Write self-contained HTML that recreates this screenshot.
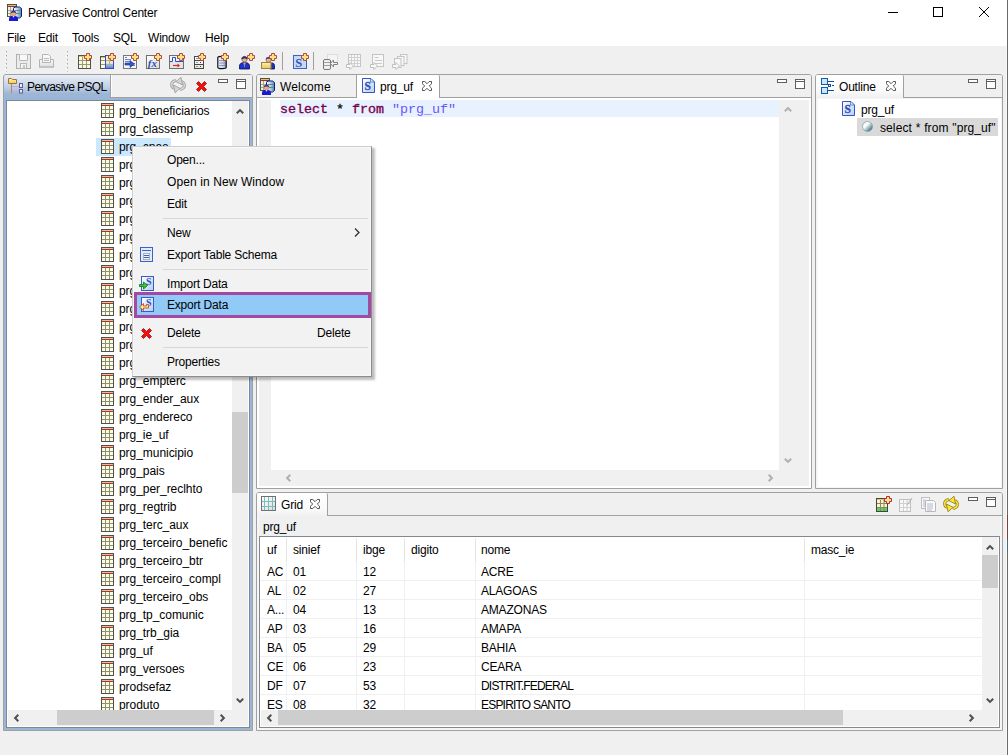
<!DOCTYPE html>
<html><head><meta charset="utf-8">
<style>
*{margin:0;padding:0;box-sizing:border-box}
html,body{width:1008px;height:755px;overflow:hidden;background:#f0f0f0;font-family:"Liberation Sans",sans-serif;font-size:12px;color:#000}
.a{position:absolute}
.t{position:absolute;white-space:nowrap;line-height:14px;letter-spacing:-0.2px}
svg{position:absolute;overflow:visible}
.tree .t{letter-spacing:-0.05px}
</style></head><body>
<svg width="0" height="0" style="position:absolute">
<defs>
<symbol id="tbl" viewBox="0 0 13 15">
<rect x="0.5" y="0.5" width="12" height="14" fill="#fbfbe6" stroke="#505050"/>
<rect x="1" y="1" width="11" height="1" fill="#f3c453"/>
<rect x="1" y="2" width="11" height="1" fill="#993366"/>
<rect x="4" y="3" width="1" height="11" fill="#8c9170"/>
<rect x="8" y="3" width="1" height="11" fill="#8c9170"/>
<rect x="1" y="6" width="11" height="1" fill="#8c9170"/>
<rect x="1" y="10" width="11" height="1" fill="#8c9170"/>
</symbol>

<symbol id="pcc" viewBox="0 0 17 17">
<rect x="1.5" y="0.5" width="9" height="12" fill="#f4f2dc" stroke="#505050"/>
<rect x="2" y="1" width="8" height="1" fill="#f0c050"/><rect x="2" y="2" width="8" height="1" fill="#8a3050"/>
<path d="M4.5 3v9M7.5 3v9M2 6.5h8M2 9.5h8" stroke="#a8a888" stroke-width="1"/>
<defs><linearGradient id="pccyl" x1="0" y1="0" x2="1" y2="0"><stop offset="0" stop-color="#ffffff"/><stop offset="0.5" stop-color="#b8d0dc"/><stop offset="1" stop-color="#4a8aa0"/></linearGradient></defs>
<path d="M7.5 4.5l1.5-1.5h4.5l2 1.5v8l-2 1.5h-4.5l-1.5-1.5z" fill="url(#pccyl)" stroke="#101a90" stroke-width="1"/>
<path d="M8.5 6.5h6M8.5 9.5h6" stroke="#5a7a98" stroke-width="0.9"/>
<circle cx="7.5" cy="9.6" r="2.5" fill="#f0b070" stroke="#a06a40" stroke-width="0.4"/><path d="M4.9 9.2c0-3.6 5.2-3.6 5.2 0c-1.2-1-4-1-5.2 0z" fill="#2a3aa8"/>
<path d="M3 17v-2.3c0-1.5 1.5-2.6 3-2.6h3c1.5 0 3 1.1 3 2.6v2.3z" fill="#1a1ad0"/><path d="M6.5 12.1l1 1.6 1-1.6z" fill="#e8e8f0"/>
</symbol>
<symbol id="sdocsym" viewBox="0 0 13 15">
<defs><linearGradient id="sdg" x1="0" y1="0" x2="1" y2="1"><stop offset="0" stop-color="#ffffff"/><stop offset="1" stop-color="#b8d0f0"/></linearGradient></defs>
<path d="M0.5 0.5h8.5l3.5 3.5v10.5h-12z" fill="url(#sdg)" stroke="#3355c8"/>
<path d="M8.5 0.5v3.5h4" fill="none" stroke="#4a7ac0" stroke-width="0.8"/>
<text x="2.6" y="12.2" font-family="Liberation Serif" font-weight="bold" font-size="11.5" fill="#2f4fc0" stroke="#2f4fc0" stroke-width="0.35">S</text>
</symbol>
<symbol id="xclose" viewBox="0 0 10 10">
<path d="M0.5 0.5h2.3l2.2 2.2 2.2-2.2h2.3v2.3l-2.2 2.2 2.2 2.2v2.3h-2.3l-2.2-2.2-2.2 2.2h-2.3v-2.3l2.2-2.2-2.2-2.2z" fill="none" stroke="#555" stroke-width="1"/>
</symbol>
</defs>
</svg>

<!-- title + menu bar -->
<div class="a" style="left:0;top:0;width:1008px;height:46px;background:#fff"></div>
<svg style="left:6px;top:4px" width="17" height="17"><use href="#pcc"/></svg>
<div class="t" style="left:28px;top:6px;">Pervasive Control Center</div>
<div class="a" style="left:888px;top:12px;width:10px;height:1px;background:#000"></div>
<div class="a" style="left:933px;top:7px;width:10px;height:10px;border:1px solid #000"></div>
<svg style="left:979px;top:7px" width="10" height="10"><path d="M0 0L10 10M10 0L0 10" stroke="#000" stroke-width="1"/></svg>

<div class="t" style="left:7px;top:31px;">File</div>
<div class="t" style="left:38px;top:31px;">Edit</div>
<div class="t" style="left:72px;top:31px;">Tools</div>
<div class="t" style="left:113px;top:31px;">SQL</div>
<div class="t" style="left:148px;top:31px;">Window</div>
<div class="t" style="left:205px;top:31px;">Help</div>


<!-- toolbar -->
<div id="toolbar">
<svg style="left:5px;top:51px" width="3" height="22"><rect x="1" y="0" width="1" height="1" fill="#a8a8a8"/><rect x="0" y="1" width="1" height="1" fill="#ffffff"/><rect x="1" y="1" width="1" height="1" fill="#d0d0d0"/><rect x="1" y="4" width="1" height="1" fill="#a8a8a8"/><rect x="0" y="5" width="1" height="1" fill="#ffffff"/><rect x="1" y="5" width="1" height="1" fill="#d0d0d0"/><rect x="1" y="8" width="1" height="1" fill="#a8a8a8"/><rect x="0" y="9" width="1" height="1" fill="#ffffff"/><rect x="1" y="9" width="1" height="1" fill="#d0d0d0"/><rect x="1" y="12" width="1" height="1" fill="#a8a8a8"/><rect x="0" y="13" width="1" height="1" fill="#ffffff"/><rect x="1" y="13" width="1" height="1" fill="#d0d0d0"/><rect x="1" y="16" width="1" height="1" fill="#a8a8a8"/><rect x="0" y="17" width="1" height="1" fill="#ffffff"/><rect x="1" y="17" width="1" height="1" fill="#d0d0d0"/><rect x="1" y="20" width="1" height="1" fill="#c8c8c8"/></svg>
<svg style="left:66px;top:51px" width="3" height="22"><rect x="1" y="0" width="1" height="1" fill="#a8a8a8"/><rect x="0" y="1" width="1" height="1" fill="#ffffff"/><rect x="1" y="1" width="1" height="1" fill="#d0d0d0"/><rect x="1" y="4" width="1" height="1" fill="#a8a8a8"/><rect x="0" y="5" width="1" height="1" fill="#ffffff"/><rect x="1" y="5" width="1" height="1" fill="#d0d0d0"/><rect x="1" y="8" width="1" height="1" fill="#a8a8a8"/><rect x="0" y="9" width="1" height="1" fill="#ffffff"/><rect x="1" y="9" width="1" height="1" fill="#d0d0d0"/><rect x="1" y="12" width="1" height="1" fill="#a8a8a8"/><rect x="0" y="13" width="1" height="1" fill="#ffffff"/><rect x="1" y="13" width="1" height="1" fill="#d0d0d0"/><rect x="1" y="16" width="1" height="1" fill="#a8a8a8"/><rect x="0" y="17" width="1" height="1" fill="#ffffff"/><rect x="1" y="17" width="1" height="1" fill="#d0d0d0"/><rect x="1" y="20" width="1" height="1" fill="#c8c8c8"/></svg>
<!-- save disabled -->
<svg style="left:16px;top:54px" width="16" height="16"><rect x="0.5" y="0.5" width="14" height="14" fill="#ececec" stroke="#b0b0b0"/><path d="M3.5 0.5v6h8v-6" fill="#f8f8f8" stroke="#b8b8b8"/><rect x="4.5" y="9.5" width="6" height="5" fill="#f4f4f0" stroke="#b8b8b8"/><rect x="7" y="11" width="2" height="3" fill="#c8c8c8"/></svg>
<!-- print disabled -->
<svg style="left:39px;top:54px" width="16" height="16"><path d="M3.5 0.5h6l2 2v6h-8z" fill="#f8f8f8" stroke="#b4b4b4"/><path d="M5 4.5h5M5 6.5h5" stroke="#b8b8c0"/><defs><linearGradient id="prg" x1="0" y1="0" x2="0" y2="1"><stop offset="0" stop-color="#fafafa"/><stop offset="1" stop-color="#dcdcdc"/></linearGradient></defs><path d="M0.5 5.5h3v3h8v-3h3v8h-14z" fill="url(#prg)" stroke="#b4b4b4"/><rect x="1" y="12" width="13" height="2" fill="#c4c4c4"/></svg>
<!-- table add -->
<svg style="left:78px;top:54px" width="16" height="16"><rect x="0.5" y="1.5" width="12" height="13" fill="#fbf8e2" stroke="#505050"/><rect x="1" y="2" width="11" height="1" fill="#f0c050"/><path d="M4.5 3v11M8.5 3v11M1 6.5h11M1 10.5h11" stroke="#9a9a70"/><path d="M8.5 -0.5 11.5 -0.5 11.5 1.5 13.5 1.5 13.5 4.5 11.5 4.5 11.5 6.5 8.5 6.5 8.5 4.5 6.5 4.5 6.5 1.5 8.5 1.5z" fill="#fde27c" stroke="#a84c4c" stroke-width="1"/></svg>
<!-- view add -->
<svg style="left:100px;top:54px" width="16" height="16"><rect x="0.5" y="2.5" width="8" height="12" fill="#fbf8e2" stroke="#505050"/><rect x="1" y="3" width="7" height="1" fill="#f0c050"/><path d="M1 6.5h7M1 10.5h7" stroke="#9a9a70"/><defs><linearGradient id="vg" x1="0" y1="0" x2="0" y2="1"><stop offset="0" stop-color="#f4f0d4"/><stop offset="0.6" stop-color="#e8e8d0"/><stop offset="0.7" stop-color="#9cc4ee"/><stop offset="1" stop-color="#4a7ac8"/></linearGradient></defs><rect x="5.5" y="1.5" width="8" height="13" fill="url(#vg)" stroke="#3a48c8"/><path d="M6 6.5h7M6 10.5h7M9.5 2v8" stroke="#b0b090"/><path d="M10.5 -0.5 13.5 -0.5 13.5 1.5 15.5 1.5 15.5 4.5 13.5 4.5 13.5 6.5 10.5 6.5 10.5 4.5 8.5 4.5 8.5 1.5 10.5 1.5z" fill="#fde27c" stroke="#a84c4c" stroke-width="1"/></svg>
<!-- import add -->
<svg style="left:123px;top:54px" width="16" height="16"><rect x="0.5" y="1.5" width="13" height="13" fill="#f6f6f6" stroke="#787878"/><path d="M2 3.5h2M2 5.5h6M2 7.5h5M8 9.5h4M8 11.5h4" stroke="#7080c0"/><path d="M2 9h5v-2.5l4.5 3.5-4.5 3.5v-2.5h-5z" fill="#2a58d0" stroke="#1a30a0" stroke-width="0.6"/><path d="M10.5 -0.5 13.5 -0.5 13.5 1.5 15.5 1.5 15.5 4.5 13.5 4.5 13.5 6.5 10.5 6.5 10.5 4.5 8.5 4.5 8.5 1.5 10.5 1.5z" fill="#fde27c" stroke="#a84c4c" stroke-width="1"/></svg>
<!-- fx -->
<svg style="left:146px;top:54px" width="16" height="16"><defs><linearGradient id="fxg" x1="0" y1="0" x2="1" y2="1"><stop offset="0" stop-color="#ffffff"/><stop offset="1" stop-color="#dcdcdc"/></linearGradient></defs><rect x="0.5" y="1.5" width="13" height="13" fill="url(#fxg)" stroke="#707070"/><text x="1.8" y="12.8" font-family="Liberation Serif" font-style="italic" font-weight="bold" font-size="11" fill="#2a52b0">fx</text><path d="M10.5 -0.5 13.5 -0.5 13.5 1.5 15.5 1.5 15.5 4.5 13.5 4.5 13.5 6.5 10.5 6.5 10.5 4.5 8.5 4.5 8.5 1.5 10.5 1.5z" fill="#fde27c" stroke="#a84c4c" stroke-width="1"/></svg>
<!-- proc -->
<svg style="left:169px;top:54px" width="16" height="16"><rect x="0.5" y="1.5" width="14" height="13" fill="#f4f4f4" stroke="#707070"/><rect x="1" y="7.5" width="13" height="6.5" fill="#e4e4e4"/><path d="M1 7.5h2.5v-4h3v4h7.5" fill="none" stroke="#2a50c8"/><path d="M4 11.5h5" stroke="#d02828" stroke-width="1.2"/><path d="M8.5 9.5l2.5 2-2.5 2z" fill="#d02828"/><path d="M10.5 -0.5 13.5 -0.5 13.5 1.5 15.5 1.5 15.5 4.5 13.5 4.5 13.5 6.5 10.5 6.5 10.5 4.5 8.5 4.5 8.5 1.5 10.5 1.5z" fill="#fde27c" stroke="#a84c4c" stroke-width="1"/></svg>
<!-- rows -->
<svg style="left:194px;top:54px" width="16" height="16"><rect x="0.5" y="2.5" width="9" height="12" fill="#e8e6d0" stroke="#484848"/><path d="M1 6.5h8M1 10.5h8" stroke="#484848"/><rect x="1" y="3" width="8" height="3" fill="#f8f8f8"/><rect x="1" y="7" width="8" height="3" fill="#f4f4ec"/><rect x="1" y="11" width="8" height="3" fill="#ecead4"/><g fill="#2a3a9a"><rect x="2.5" y="4" width="1" height="1"/><rect x="2.5" y="8" width="1" height="1"/><rect x="6" y="8" width="1" height="1"/><rect x="2.5" y="12" width="1" height="1"/><rect x="6" y="12" width="1" height="1"/></g><path d="M6.5 -0.5 9.5 -0.5 9.5 1.5 11.5 1.5 11.5 4.5 9.5 4.5 9.5 6.5 6.5 6.5 6.5 4.5 4.5 4.5 4.5 1.5 6.5 1.5z" fill="#fde27c" stroke="#a84c4c" stroke-width="1"/></svg>
<!-- cylinder -->
<svg style="left:217px;top:54px" width="16" height="16"><defs><linearGradient id="cyl" x1="0" y1="0" x2="1" y2="0"><stop offset="0" stop-color="#f8fbff"/><stop offset="0.6" stop-color="#c8d8ec"/><stop offset="1" stop-color="#7a9ac0"/></linearGradient></defs><path d="M0.8 3.5c0-1.5 8.4-1.5 8.4 0v10c0 1.5-8.4 1.5-8.4 0z" fill="url(#cyl)" stroke="#101010" stroke-width="1.2"/><path d="M2 6.5h6M2 9h6M2 11.5h6" stroke="#8080b0" stroke-width="0.8"/><path d="M6.5 -0.5 9.5 -0.5 9.5 1.5 11.5 1.5 11.5 4.5 9.5 4.5 9.5 6.5 6.5 6.5 6.5 4.5 4.5 4.5 4.5 1.5 6.5 1.5z" fill="#fde27c" stroke="#a84c4c" stroke-width="1"/></svg>
<!-- user -->
<svg style="left:239px;top:54px" width="16" height="16"><path d="M0.5 15v-3c0-2 1.5-3 3-3.3h4c1.5 0.3 3 1.3 3 3.3v3z" fill="#1a32d0" stroke="#101040" stroke-width="0.8"/><path d="M4.5 8.8h2l-1 5z" fill="#f0f0f0"/><path d="M5 9.5h1l-0.5 4z" fill="#c03040"/><circle cx="5.5" cy="5.3" r="2.6" fill="#f0b880" stroke="#603020" stroke-width="0.5"/><path d="M2.7 5c0-3.5 5.6-3.5 5.6 0c-1-1-4.6-1-5.6 0z" fill="#2a3aa0" stroke="#101040" stroke-width="0.5"/><path d="M10.5 -0.5 13.5 -0.5 13.5 1.5 15.5 1.5 15.5 4.5 13.5 4.5 13.5 6.5 10.5 6.5 10.5 4.5 8.5 4.5 8.5 1.5 10.5 1.5z" fill="#fde27c" stroke="#a84c4c" stroke-width="1"/></svg>
<!-- group -->
<svg style="left:261px;top:54px" width="16" height="16"><path d="M9 15v-3.5c0-1.5 1-2.5 2.2-2.5s2.3 1 2.3 2.5v3.5z" fill="#1a32c0" stroke="#101040" stroke-width="0.8"/><circle cx="7.5" cy="5.8" r="2.5" fill="#f0b880" stroke="#603020" stroke-width="0.5"/><path d="M4.8 5.5c0-3.3 5.4-3.3 5.4 0c-1-1-4.4-1-5.4 0z" fill="#2a3aa0"/><defs><linearGradient id="fg2" x1="0" y1="0" x2="0" y2="1"><stop offset="0" stop-color="#f6f2a8"/><stop offset="1" stop-color="#e8c860"/></linearGradient></defs><rect x="0.5" y="8.5" width="9.5" height="6" fill="url(#fg2)" stroke="#a08040"/><path d="M10.5 -0.5 13.5 -0.5 13.5 1.5 15.5 1.5 15.5 4.5 13.5 4.5 13.5 6.5 10.5 6.5 10.5 4.5 8.5 4.5 8.5 1.5 10.5 1.5z" fill="#fde27c" stroke="#a84c4c" stroke-width="1"/></svg>
<div class="a" style="left:282px;top:52px;width:1px;height:18px;background:#a0a0a0"></div>
<!-- S add -->
<svg style="left:293px;top:54px" width="16" height="16"><rect x="0.5" y="1.5" width="13" height="13" fill="#c5d9f3" stroke="#3a62c8"/><text x="2.3" y="12.8" font-family="Liberation Serif" font-weight="bold" font-size="12.5" fill="#3050c0">S</text><path d="M10.5 -0.5 13.5 -0.5 13.5 1.5 15.5 1.5 15.5 4.5 13.5 4.5 13.5 6.5 10.5 6.5 10.5 4.5 8.5 4.5 8.5 1.5 10.5 1.5z" fill="#fde27c" stroke="#a84c4c" stroke-width="1"/></svg>
<div class="a" style="left:313px;top:52px;width:1px;height:18px;background:#a0a0a0"></div>
<!-- disabled -->
<svg style="left:323px;top:54px" width="16" height="16"><rect x="4.5" y="0.5" width="10" height="10" fill="#f4f4f4" stroke="#dcdcdc"/><rect x="0.5" y="5.5" width="7" height="10" rx="1.5" fill="#f0f0f0" stroke="#787878"/><path d="M1 8.5h6M1 11.5h6" stroke="#a0a0a0"/><path d="M14.5 8.5h-4v-2.5l-3 3.5 3 3.5v-2.5h4z" fill="#f4f4f4" stroke="#808080"/></svg>
<svg style="left:346px;top:54px" width="16" height="16"><rect x="2.5" y="0.5" width="12" height="12" fill="#f8f8f8" stroke="#c4c4c4"/><path d="M5.5 1v11M8.5 1v11M11.5 1v11M3 3.5h11M3 6.5h11M3 9.5h11" stroke="#d0d0d0"/><path d="M0.5 10.5h3.5v-2l3.5 3.5-3.5 3.5v-2h-3.5z" fill="#f8f8f8" stroke="#c0c0c0"/></svg>
<svg style="left:370px;top:54px" width="16" height="16"><rect x="2.5" y="0.5" width="11" height="12" fill="#f8f8f8" stroke="#c4c4c4"/><path d="M4.5 3.5h4M5 6.5h7M5 9.5h7" stroke="#c8c8c8"/><path d="M0.5 10.5h3.5v-2l3.5 3.5-3.5 3.5v-2h-3.5z" fill="#f8f8f8" stroke="#c0c0c0"/></svg>
<svg style="left:392px;top:54px" width="16" height="16"><rect x="8.5" y="0.5" width="6.5" height="9" fill="#f8f8f8" stroke="#c4c4c4"/><rect x="5.5" y="2.5" width="6.5" height="9" fill="#f8f8f8" stroke="#c4c4c4"/><rect x="2.5" y="4.5" width="6.5" height="9" fill="#f8f8f8" stroke="#c4c4c4"/><path d="M0.5 10.5h3.5v-2l3.5 3.5-3.5 3.5v-2h-3.5z" fill="#f8f8f8" stroke="#c0c0c0"/></svg>
</div>


<!-- ============ LEFT PANEL (Pervasive PSQL) ============ -->
<div class="a" style="left:3px;top:74px;width:250px;height:657px;border:1px solid #a0a0a0;border-radius:3px 3px 0 0;background:#9bb5d6"></div>
<div class="a" style="left:111px;top:75px;width:141px;height:22px;background:#f0f0f0;border-left:1px solid #fff"></div>
<div class="a" style="left:110px;top:75px;width:142px;height:23px;border-left:1px solid #a0a0a0;border-bottom:1px solid #a0a0a0"></div>
<div class="a" style="left:4px;top:75px;width:106px;height:24px;border-radius:2px 0 0 0;background:linear-gradient(#e8eef7,#c0d0e4 50%,#9db6d6 78%,#9bb5d6)"></div>
<div class="a" style="left:6px;top:100px;width:244px;height:628px;border:1px solid #7c8796;background:#fff"></div>
<!-- folder tree icon -->
<svg style="left:8px;top:78px" width="16" height="16">
<defs><linearGradient id="fold" x1="0" y1="0" x2="0" y2="1"><stop offset="0" stop-color="#fff6b0"/><stop offset="1" stop-color="#f8c840"/></linearGradient></defs>
<path d="M0.5 0.5h3l1 1h4v4h-8z" fill="url(#fold)" stroke="#a87038"/>
<rect x="3" y="6" width="1" height="9" fill="#b8865a"/>
<path d="M4 8.5h7M4 13.5h7" stroke="#c8a8d8"/>
<rect x="11.5" y="5.5" width="3" height="4" fill="#e4f0dc" stroke="#5a5aa8"/>
<rect x="11.5" y="11.5" width="3" height="3.5" fill="#e4f0dc" stroke="#5a5aa8"/>
</svg>
<div class="t" style="left:27px;top:80px;letter-spacing:-0.6px">Pervasive PSQL</div>
<!-- sync disabled -->
<svg style="left:170px;top:77px" width="17" height="17"><g fill="none" stroke-linecap="round">
<path d="M5 3.8C0.5 5 0.5 10.5 5 11.3" stroke="#a4a4a4" stroke-width="3"/>
<path d="M11 12.2C15.5 11 15.5 5.5 11 4.7" stroke="#a4a4a4" stroke-width="3"/>
<path d="M5 3.8C0.5 5 0.5 10.5 5 11.3" stroke="#d4d4d4" stroke-width="1.4"/>
<path d="M11 12.2C15.5 11 15.5 5.5 11 4.7" stroke="#d4d4d4" stroke-width="1.4"/></g>
<path d="M3.5 8L10 11.3 5 15.8z" fill="#d4d4d4" stroke="#a4a4a4" stroke-width="0.9" stroke-linejoin="round"/>
<path d="M12.5 8L6 4.7 11 0.2z" fill="#d4d4d4" stroke="#a4a4a4" stroke-width="0.9" stroke-linejoin="round"/>
</svg>
<!-- red x -->
<svg style="left:196px;top:81px" width="11" height="11"><path d="M0.5 2.5l2-2 3 3 3-3 2 2-3 3 3 3-2 2-3-3-3 3-2-2 3-3z" fill="#ee1111" stroke="#b00000" stroke-width="0.8"/></svg>
<!-- min / max -->
<div class="a" style="left:218px;top:79px;width:10px;height:4px;border:1px solid #5e5e5e;background:#fff"></div>
<div class="a" style="left:236px;top:79px;width:10px;height:10px;border:1px solid #5e5e5e;background:#fff;box-shadow:inset 0 1px 0 #fff,inset 0 2px 0 #5e5e5e"></div>

<!-- tree -->
<div class="a tree" style="left:7px;top:101px;width:225px;height:609px;overflow:hidden">
<div class="a" style="left:89px;top:37px;width:75px;height:18px;background:#cce8ff"></div>
<svg style="left:94px;top:2px" width="13" height="15"><use href="#tbl"/></svg><div class="t" style="left:112px;top:3px">prg_beneficiarios</div>
<svg style="left:94px;top:20px" width="13" height="15"><use href="#tbl"/></svg><div class="t" style="left:112px;top:21px">prg_classemp</div>
<svg style="left:94px;top:38px" width="13" height="15"><use href="#tbl"/></svg><div class="t" style="left:112px;top:39px">prg_cnae</div>
<svg style="left:94px;top:56px" width="13" height="15"><use href="#tbl"/></svg><div class="t" style="left:112px;top:57px">prg_cnae_sub</div>
<svg style="left:94px;top:74px" width="13" height="15"><use href="#tbl"/></svg><div class="t" style="left:112px;top:75px">prg_compl</div>
<svg style="left:94px;top:92px" width="13" height="15"><use href="#tbl"/></svg><div class="t" style="left:112px;top:93px">prg_conta</div>
<svg style="left:94px;top:110px" width="13" height="15"><use href="#tbl"/></svg><div class="t" style="left:112px;top:111px">prg_contab</div>
<svg style="left:94px;top:128px" width="13" height="15"><use href="#tbl"/></svg><div class="t" style="left:112px;top:129px">prg_cst</div>
<svg style="left:94px;top:146px" width="13" height="15"><use href="#tbl"/></svg><div class="t" style="left:112px;top:147px">prg_doc</div>
<svg style="left:94px;top:164px" width="13" height="15"><use href="#tbl"/></svg><div class="t" style="left:112px;top:165px">prg_emp</div>
<svg style="left:94px;top:182px" width="13" height="15"><use href="#tbl"/></svg><div class="t" style="left:112px;top:183px">prg_emp_aux</div>
<svg style="left:94px;top:200px" width="13" height="15"><use href="#tbl"/></svg><div class="t" style="left:112px;top:201px">prg_emp_compl</div>
<svg style="left:94px;top:218px" width="13" height="15"><use href="#tbl"/></svg><div class="t" style="left:112px;top:219px">prg_emp_obs</div>
<svg style="left:94px;top:236px" width="13" height="15"><use href="#tbl"/></svg><div class="t" style="left:112px;top:237px">prg_empresa</div>
<svg style="left:94px;top:254px" width="13" height="15"><use href="#tbl"/></svg><div class="t" style="left:112px;top:255px">prg_empresas</div>
<svg style="left:94px;top:272px" width="13" height="15"><use href="#tbl"/></svg><div class="t" style="left:112px;top:273px">prg_empterc</div>
<svg style="left:94px;top:290px" width="13" height="15"><use href="#tbl"/></svg><div class="t" style="left:112px;top:291px">prg_ender_aux</div>
<svg style="left:94px;top:308px" width="13" height="15"><use href="#tbl"/></svg><div class="t" style="left:112px;top:309px">prg_endereco</div>
<svg style="left:94px;top:326px" width="13" height="15"><use href="#tbl"/></svg><div class="t" style="left:112px;top:327px">prg_ie_uf</div>
<svg style="left:94px;top:344px" width="13" height="15"><use href="#tbl"/></svg><div class="t" style="left:112px;top:345px">prg_municipio</div>
<svg style="left:94px;top:362px" width="13" height="15"><use href="#tbl"/></svg><div class="t" style="left:112px;top:363px">prg_pais</div>
<svg style="left:94px;top:380px" width="13" height="15"><use href="#tbl"/></svg><div class="t" style="left:112px;top:381px">prg_per_reclhto</div>
<svg style="left:94px;top:398px" width="13" height="15"><use href="#tbl"/></svg><div class="t" style="left:112px;top:399px">prg_regtrib</div>
<svg style="left:94px;top:416px" width="13" height="15"><use href="#tbl"/></svg><div class="t" style="left:112px;top:417px">prg_terc_aux</div>
<svg style="left:94px;top:434px" width="13" height="15"><use href="#tbl"/></svg><div class="t" style="left:112px;top:435px">prg_terceiro_benefic</div>
<svg style="left:94px;top:452px" width="13" height="15"><use href="#tbl"/></svg><div class="t" style="left:112px;top:453px">prg_terceiro_btr</div>
<svg style="left:94px;top:470px" width="13" height="15"><use href="#tbl"/></svg><div class="t" style="left:112px;top:471px">prg_terceiro_compl</div>
<svg style="left:94px;top:488px" width="13" height="15"><use href="#tbl"/></svg><div class="t" style="left:112px;top:489px">prg_terceiro_obs</div>
<svg style="left:94px;top:506px" width="13" height="15"><use href="#tbl"/></svg><div class="t" style="left:112px;top:507px">prg_tp_comunic</div>
<svg style="left:94px;top:524px" width="13" height="15"><use href="#tbl"/></svg><div class="t" style="left:112px;top:525px">prg_trb_gia</div>
<svg style="left:94px;top:542px" width="13" height="15"><use href="#tbl"/></svg><div class="t" style="left:112px;top:543px">prg_uf</div>
<svg style="left:94px;top:560px" width="13" height="15"><use href="#tbl"/></svg><div class="t" style="left:112px;top:561px">prg_versoes</div>
<svg style="left:94px;top:578px" width="13" height="15"><use href="#tbl"/></svg><div class="t" style="left:112px;top:579px">prodsefaz</div>
<svg style="left:94px;top:596px" width="13" height="15"><use href="#tbl"/></svg><div class="t" style="left:112px;top:597px">produto</div>
</div>
<div class="a" style="left:232px;top:101px;width:16px;height:609px;background:#f0f0f0"></div>
<div class="a" style="left:232px;top:412px;width:16px;height:81px;background:#cdcdcd"></div>
<svg style="left:236px;top:108px" width="8" height="6"><path d="M0.8 5.3L4 2.1 7.2 5.3" fill="none" stroke="#505050" stroke-width="2"/></svg>
<svg style="left:236px;top:698px" width="8" height="6"><path d="M0.8 0.7L4 3.9 7.2 0.7" fill="none" stroke="#505050" stroke-width="2"/></svg>
<div class="a" style="left:8px;top:710px;width:240px;height:16px;background:#f0f0f0"></div>
<div class="a" style="left:57px;top:710px;width:157px;height:15px;background:#cdcdcd"></div>
<svg style="left:13px;top:714px" width="6" height="8"><path d="M5.3 0.8L2.1 4 5.3 7.2" fill="none" stroke="#505050" stroke-width="2"/></svg>
<svg style="left:220px;top:714px" width="6" height="8"><path d="M0.7 0.8L3.9 4 0.7 7.2" fill="none" stroke="#505050" stroke-width="2"/></svg>

<!-- ============ EDITOR PANEL ============ -->
<div class="a" style="left:256px;top:74px;width:556px;height:415px;border:1px solid #a0a0a0;border-radius:3px 3px 0 0;background:#fff"></div>
<div class="a" style="left:257px;top:75px;width:554px;height:23px;background:#f0f0f0;border-bottom:1px solid #a0a0a0;border-radius:2px 2px 0 0"></div>
<div class="a" style="left:356px;top:75px;width:84px;height:23px;background:#fff;border-left:1px solid #a0a0a0;border-right:1px solid #a0a0a0;border-radius:0 2px 0 0"></div>
<!-- welcome icon -->
<svg style="left:259px;top:78px" width="17" height="17"><use href="#pcc"/></svg>
<div class="t" style="left:280px;top:80px;letter-spacing:0.15px">Welcome</div>
<!-- S doc icon -->
<svg style="left:362px;top:78px" width="13" height="15"><use href="#sdocsym"/></svg>
<div class="t" style="left:380px;top:80px">prg_uf</div>
<svg style="left:422px;top:81px" width="10" height="10"><use href="#xclose"/></svg>
<div class="a" style="left:777px;top:79px;width:10px;height:4px;border:1px solid #5e5e5e;background:#fff"></div>
<div class="a" style="left:795px;top:79px;width:10px;height:10px;border:1px solid #5e5e5e;background:#fff;box-shadow:inset 0 1px 0 #fff,inset 0 2px 0 #5e5e5e"></div>
<!-- editor content -->
<div class="a" style="left:259px;top:100px;width:12px;height:370px;background:#f0f0f0"></div>
<div class="a" style="left:280px;top:100px;width:499px;height:17px;background:#e8f2fe"></div>
<div class="a" style="left:779px;top:100px;width:30px;height:386px;background:#f0f0f0"></div>
<div class="a" style="left:259px;top:470px;width:521px;height:16px;background:#f0f0f0"></div>
<div class="t" style="left:280px;top:102px;font-family:'Liberation Mono',monospace;font-size:13.33px;line-height:15px;font-weight:normal;-webkit-text-stroke:0.35px #6e004a;color:#7f0055;letter-spacing:0">select <span style="color:#000;font-weight:normal;-webkit-text-stroke:0.3px #000">*</span> from <span style="color:#6656ff;font-weight:normal;-webkit-text-stroke:0">"prg_uf"</span></div>
<svg style="left:784px;top:106px" width="8" height="6"><path d="M0.8 5.3L4 2.1 7.2 5.3" fill="none" stroke="#b0b0b0" stroke-width="2"/></svg>
<svg style="left:784px;top:458px" width="8" height="6"><path d="M0.8 0.7L4 3.9 7.2 0.7" fill="none" stroke="#b0b0b0" stroke-width="2"/></svg>
<svg style="left:285px;top:474px" width="6" height="8"><path d="M5.3 0.8L2.1 4 5.3 7.2" fill="none" stroke="#b0b0b0" stroke-width="2"/></svg>
<svg style="left:768px;top:474px" width="6" height="8"><path d="M0.7 0.8L3.9 4 0.7 7.2" fill="none" stroke="#b0b0b0" stroke-width="2"/></svg>

<!-- ============ OUTLINE PANEL ============ -->
<div class="a" style="left:815px;top:74px;width:188px;height:415px;border:1px solid #a0a0a0;border-radius:3px 3px 0 0;background:#f5f5f5"></div>
<div class="a" style="left:818px;top:99px;width:183px;height:388px;background:#fff"></div>
<div class="a" style="left:816px;top:75px;width:186px;height:23px;background:#f0f0f0;border-bottom:1px solid #a0a0a0;border-radius:2px 2px 0 0"></div>
<div class="a" style="left:816px;top:75px;width:88px;height:23px;background:linear-gradient(#fff,#fafafa 70%,#f0f0f0);border-right:1px solid #a0a0a0;border-radius:2px 2px 0 0"></div>
<svg style="left:821px;top:78px" width="14" height="16">
<rect x="0.5" y="0.5" width="6" height="6" fill="#cfe4fa" stroke="#0f5fa8"/>
<rect x="0.5" y="9.5" width="6" height="6" fill="#cfe4fa" stroke="#0f5fa8"/>
<path d="M7 3.5h6M7 12.5h6M11 7.5h2" stroke="#0f4f90"/>
<rect x="7.5" y="6.5" width="2" height="2" fill="#fff" stroke="#0f4f90"/>
</svg>
<div class="t" style="left:839px;top:80px">Outline</div>
<svg style="left:886px;top:81px" width="10" height="10"><use href="#xclose"/></svg>
<div class="a" style="left:968px;top:79px;width:10px;height:4px;border:1px solid #5e5e5e;background:#fff"></div>
<div class="a" style="left:986px;top:79px;width:10px;height:10px;border:1px solid #5e5e5e;background:#fff;box-shadow:inset 0 1px 0 #fff,inset 0 2px 0 #5e5e5e"></div>
<svg style="left:842px;top:101px" width="13" height="15"><use href="#sdocsym"/></svg>
<div class="t" style="left:861px;top:103px">prg_uf</div>
<div class="a" style="left:857px;top:118px;width:141px;height:18px;background:#d9d9d9"></div>
<svg style="left:862px;top:121px" width="12" height="12"><defs><linearGradient id="ball" x1="0.1" y1="0.1" x2="0.9" y2="0.9"><stop offset="0" stop-color="#e8f0f0"/><stop offset="0.35" stop-color="#ffffff"/><stop offset="0.6" stop-color="#a8c8c0"/><stop offset="1" stop-color="#2a5a8a"/></linearGradient></defs><circle cx="5.5" cy="5.5" r="5" fill="url(#ball)" stroke="#7a9aa8" stroke-width="0.7"/></svg>
<div class="t" style="left:880px;top:121px;letter-spacing:0.1px;word-spacing:0.3px">select * from "prg_uf"</div>

<!-- ============ GRID PANEL ============ -->
<div class="a" style="left:256px;top:492px;width:747px;height:239px;border:1px solid #a0a0a0;border-radius:3px 3px 0 0;background:#f6f6f6"></div>
<div class="a" style="left:257px;top:493px;width:745px;height:23px;background:#f0f0f0;border-bottom:1px solid #a0a0a0;border-radius:2px 2px 0 0"></div>
<div class="a" style="left:257px;top:493px;width:71px;height:23px;background:linear-gradient(#fff,#fafafa 70%,#f0f0f0);border-right:1px solid #a0a0a0;border-radius:2px 2px 0 0"></div>
<div class="a" style="left:259px;top:516px;width:741px;height:212px;background:#f0f0f0"></div>
<svg style="left:261px;top:496px" width="16" height="16">
<rect x="0.5" y="0.5" width="14" height="14" fill="#fff" stroke="#707070"/>
<defs><linearGradient id="gridg" x1="0" y1="0" x2="1" y2="1"><stop offset="0" stop-color="#ffffff"/><stop offset="1" stop-color="#e2dcdc"/></linearGradient></defs><rect x="1" y="1" width="13" height="13" fill="url(#gridg)"/><path d="M3.5 1v13M7.5 1v13M11.5 1v13M1 5.5h13M1 10.5h13" stroke="#72c0c0"/>
</svg>
<div class="t" style="left:281px;top:498px">Grid</div>
<svg style="left:310px;top:499px" width="10" height="10"><use href="#xclose"/></svg>
<div class="a" style="left:968px;top:497px;width:10px;height:4px;border:1px solid #5e5e5e;background:#fff"></div>
<div class="a" style="left:986px;top:497px;width:10px;height:10px;border:1px solid #5e5e5e;background:#fff;box-shadow:inset 0 1px 0 #fff,inset 0 2px 0 #5e5e5e"></div>

<svg style="left:876px;top:496px" width="15" height="16"><rect x="0.5" y="2.5" width="11" height="13" fill="#f7f3cf" stroke="#444"/><rect x="1" y="3" width="10" height="1" fill="#e8c45a"/><rect x="1" y="12" width="10" height="3" fill="#5cd05c"/><path d="M4.5 4v11M8 4v11M1 7.5h10M1 11.5h10" stroke="#8a8a60"/><path d="M10.5 0.5h3v2h2v3h-2v2h-3v-2h-2v-3h2z" fill="#ffe08a" stroke="#b03030"/></svg>
<svg style="left:899px;top:497px" width="15" height="15"><rect x="0.5" y="2.5" width="11" height="12" fill="#f8f8f8" stroke="#c0c0c0"/><path d="M4.5 3v11M8 3v11M1 6.5h10M1 10.5h10" stroke="#d0d0d0"/><path d="M8 8l5-7" stroke="#b8b8b8" stroke-width="1.2"/></svg>
<svg style="left:921px;top:497px" width="15" height="15"><rect x="0.5" y="0.5" width="8" height="11" fill="#f6f6f6" stroke="#c0c0c0"/><path d="M4.5 3.5h8l2 2v9h-10z" fill="#fafafa" stroke="#b8b8b8"/><path d="M6 7h6M6 9h6M6 11h6M6 13h5M2 3h2M2 5h2M2 7h2M2 9h2" stroke="#b0b8c8"/></svg>
<svg style="left:943px;top:496px" width="17" height="17"><g fill="none" stroke-linecap="round">
<path d="M5 3.8C0.5 5 0.5 10.5 5 11.3" stroke="#9a8420" stroke-width="3"/>
<path d="M11 12.2C15.5 11 15.5 5.5 11 4.7" stroke="#9a8420" stroke-width="3"/>
<path d="M5 3.8C0.5 5 0.5 10.5 5 11.3" stroke="#fbe830" stroke-width="1.4"/>
<path d="M11 12.2C15.5 11 15.5 5.5 11 4.7" stroke="#fbe830" stroke-width="1.4"/></g>
<path d="M3.5 8L10 11.3 5 15.8z" fill="#fbe830" stroke="#9a8420" stroke-width="0.9" stroke-linejoin="round"/>
<path d="M12.5 8L6 4.7 11 0.2z" fill="#fbe830" stroke="#9a8420" stroke-width="0.9" stroke-linejoin="round"/>
</svg>
<div class="t" style="left:263px;top:520px">prg_uf</div>
<!-- table -->
<div class="a" style="left:259px;top:536px;width:741px;height:192px;border:1px solid #828790;background:#fff"></div>

<!-- grid table -->
<div class="a" style="left:286px;top:538px;width:1px;height:24px;background:#e5e5e5"></div>
<div class="a" style="left:286px;top:562px;width:1px;height:148px;background:#eaf0f8"></div>
<div class="a" style="left:356px;top:538px;width:1px;height:24px;background:#e5e5e5"></div>
<div class="a" style="left:356px;top:562px;width:1px;height:148px;background:#eaf0f8"></div>
<div class="a" style="left:404px;top:538px;width:1px;height:24px;background:#e5e5e5"></div>
<div class="a" style="left:404px;top:562px;width:1px;height:148px;background:#eaf0f8"></div>
<div class="a" style="left:475px;top:538px;width:1px;height:24px;background:#e5e5e5"></div>
<div class="a" style="left:475px;top:562px;width:1px;height:148px;background:#eaf0f8"></div>
<div class="a" style="left:804px;top:538px;width:1px;height:24px;background:#e5e5e5"></div>
<div class="a" style="left:804px;top:562px;width:1px;height:148px;background:#eaf0f8"></div>
<div class="a" style="left:260px;top:580px;width:722px;height:1px;background:#f0f0f0"></div>
<div class="a" style="left:260px;top:599px;width:722px;height:1px;background:#f0f0f0"></div>
<div class="a" style="left:260px;top:618px;width:722px;height:1px;background:#f0f0f0"></div>
<div class="a" style="left:260px;top:637px;width:722px;height:1px;background:#f0f0f0"></div>
<div class="a" style="left:260px;top:656px;width:722px;height:1px;background:#f0f0f0"></div>
<div class="a" style="left:260px;top:675px;width:722px;height:1px;background:#f0f0f0"></div>
<div class="a" style="left:260px;top:694px;width:722px;height:1px;background:#f0f0f0"></div>
<div class="t" style="left:267px;top:543px">uf</div>
<div class="t" style="left:293px;top:543px">sinief</div>
<div class="t" style="left:363px;top:543px">ibge</div>
<div class="t" style="left:411px;top:543px">digito</div>
<div class="t" style="left:481px;top:543px">nome</div>
<div class="t" style="left:811px;top:543px">masc_ie</div>
<div class="a" style="left:260px;top:562px;width:722px;height:148px;overflow:hidden">
<div class="t" style="left:7px;top:3px">AC</div>
<div class="t" style="left:33px;top:3px">01</div>
<div class="t" style="left:103px;top:3px">12</div>
<div class="t" style="left:221px;top:3px">ACRE</div>
<div class="t" style="left:7px;top:22px">AL</div>
<div class="t" style="left:33px;top:22px">02</div>
<div class="t" style="left:103px;top:22px">27</div>
<div class="t" style="left:221px;top:22px">ALAGOAS</div>
<div class="t" style="left:7px;top:41px">A...</div>
<div class="t" style="left:33px;top:41px">04</div>
<div class="t" style="left:103px;top:41px">13</div>
<div class="t" style="left:221px;top:41px">AMAZONAS</div>
<div class="t" style="left:7px;top:60px">AP</div>
<div class="t" style="left:33px;top:60px">03</div>
<div class="t" style="left:103px;top:60px">16</div>
<div class="t" style="left:221px;top:60px">AMAPA</div>
<div class="t" style="left:7px;top:79px">BA</div>
<div class="t" style="left:33px;top:79px">05</div>
<div class="t" style="left:103px;top:79px">29</div>
<div class="t" style="left:221px;top:79px">BAHIA</div>
<div class="t" style="left:7px;top:98px">CE</div>
<div class="t" style="left:33px;top:98px">06</div>
<div class="t" style="left:103px;top:98px">23</div>
<div class="t" style="left:221px;top:98px">CEARA</div>
<div class="t" style="left:7px;top:117px">DF</div>
<div class="t" style="left:33px;top:117px">07</div>
<div class="t" style="left:103px;top:117px">53</div>
<div class="t" style="left:221px;top:117px;letter-spacing:-0.8px">DISTRIT.FEDERAL</div>
<div class="t" style="left:7px;top:136px">ES</div>
<div class="t" style="left:33px;top:136px">08</div>
<div class="t" style="left:103px;top:136px">32</div>
<div class="t" style="left:221px;top:136px;letter-spacing:-0.8px">ESPIRITO SANTO</div>
</div>
<div class="a" style="left:982px;top:537px;width:16px;height:173px;background:#f0f0f0"></div>
<div class="a" style="left:982px;top:555px;width:16px;height:33px;background:#cdcdcd"></div>
<svg style="left:986px;top:544px" width="8" height="6"><path d="M0.8 5.3L4 2.1 7.2 5.3" fill="none" stroke="#505050" stroke-width="2"/></svg>
<svg style="left:986px;top:698px" width="8" height="6"><path d="M0.8 0.7L4 3.9 7.2 0.7" fill="none" stroke="#505050" stroke-width="2"/></svg>
<div class="a" style="left:261px;top:710px;width:737px;height:16px;background:#f0f0f0"></div>
<div class="a" style="left:278px;top:710px;width:565px;height:15px;background:#cdcdcd"></div>
<svg style="left:266px;top:714px" width="6" height="8"><path d="M5.3 0.8L2.1 4 5.3 7.2" fill="none" stroke="#505050" stroke-width="2"/></svg>
<svg style="left:969px;top:714px" width="6" height="8"><path d="M0.7 0.8L3.9 4 0.7 7.2" fill="none" stroke="#505050" stroke-width="2"/></svg>

<!-- ============ CONTEXT MENU ============ -->

<div class="a" style="left:134px;top:148px;width:241px;height:232px;background:rgba(0,0,0,0.25);filter:blur(1px)"></div>
<div class="a" style="left:132px;top:146px;width:240px;height:231px;border:1px solid;border-color:#cdcdcd #8c8c8c #8c8c8c #cdcdcd;background:#f2f2f2;box-shadow:inset 0 0 0 1px #f8f8f8"></div>
<div class="t" style="left:167px;top:153px">Open...</div>
<div class="t" style="left:167px;top:175px;letter-spacing:0.1px">Open in New Window</div>
<div class="t" style="left:167px;top:197px">Edit</div>
<div class="a" style="left:163px;top:218px;width:205px;height:1px;background:#d7d7d7"></div>
<div class="t" style="left:167px;top:226px">New</div>
<svg style="left:354px;top:228px" width="6" height="9"><path d="M1 0.5L5 4.5 1 8.5" fill="none" stroke="#333" stroke-width="1.3"/></svg>
<svg style="left:140px;top:247px" width="14" height="16"><rect x="0.5" y="0.5" width="12" height="14" fill="#e0ecfa" stroke="#3a62c8"/><path d="M2 3.5h9" stroke="#3a62c8"/><rect x="3" y="6" width="7" height="7" fill="#d0d0d0"/><rect x="3.5" y="6.5" width="6" height="6" fill="#f4f4f4" stroke="#b0b0b0"/><path d="M4 8.5h5M4 10.5h5" stroke="#3a62c8"/></svg>
<div class="t" style="left:167px;top:248px">Export Table Schema</div>
<div class="a" style="left:163px;top:269px;width:205px;height:1px;background:#d7d7d7"></div>
<svg style="left:139px;top:276px" width="16" height="16"><defs><linearGradient id="sdg2" x1="0" y1="0" x2="1" y2="1"><stop offset="0" stop-color="#ffffff"/><stop offset="1" stop-color="#b4cdf0"/></linearGradient></defs><rect x="2.5" y="0.5" width="12" height="14" fill="url(#sdg2)" stroke="#3a5ac8"/><text x="7" y="9" font-family="Liberation Serif" font-weight="bold" font-size="10" fill="#3050c0">S</text><path d="M0.5 8.5h4v-2.5l4 3.5-4 3.5v-2.5h-4z" fill="#3cc040" stroke="#1a8020" stroke-width="0.9"/></svg>
<div class="t" style="left:167px;top:277px">Import Data</div>
<div class="a" style="left:134px;top:292px;width:237px;height:26px;border:3px solid #a349a4;background:#91c9f7"></div>
<svg style="left:139px;top:297px" width="16" height="16"><rect x="2.5" y="0.5" width="12" height="14" fill="url(#sdg2)" stroke="#3a5ac8"/><text x="7" y="9" font-family="Liberation Serif" font-weight="bold" font-size="10" fill="#3050c0">S</text><path d="M9.5 7.5v3.5h-5v2.5l-4-3.5 4-3.5v2.5h3v-1.5z" fill="#ffe890" stroke="#c05030" stroke-width="0.9"/></svg>
<div class="t" style="left:167px;top:298px">Export Data</div>
<svg style="left:141px;top:328px" width="11" height="11"><path d="M0.5 2.5l2-2 3 3 3-3 2 2-3 3 3 3-2 2-3-3-3 3-2-2 3-3z" fill="#ee1111" stroke="#b00000" stroke-width="0.8"/></svg>
<div class="t" style="left:167px;top:326px">Delete</div>
<div class="t" style="left:317px;top:326px">Delete</div>
<div class="a" style="left:163px;top:347px;width:205px;height:1px;background:#d7d7d7"></div>
<div class="t" style="left:167px;top:355px">Properties</div>


<!-- right window edge -->
<div class="a" style="left:1006px;top:46px;width:1px;height:709px;background:#fafafa"></div><div class="a" style="left:1007px;top:0;width:1px;height:755px;background:#6a6a6a"></div><div class="a" style="left:1007px;top:515px;width:1px;height:25px;background:#7a4040"></div><div class="a" style="left:1007px;top:540px;width:1px;height:12px;background:#3a7080"></div>

</body></html>
